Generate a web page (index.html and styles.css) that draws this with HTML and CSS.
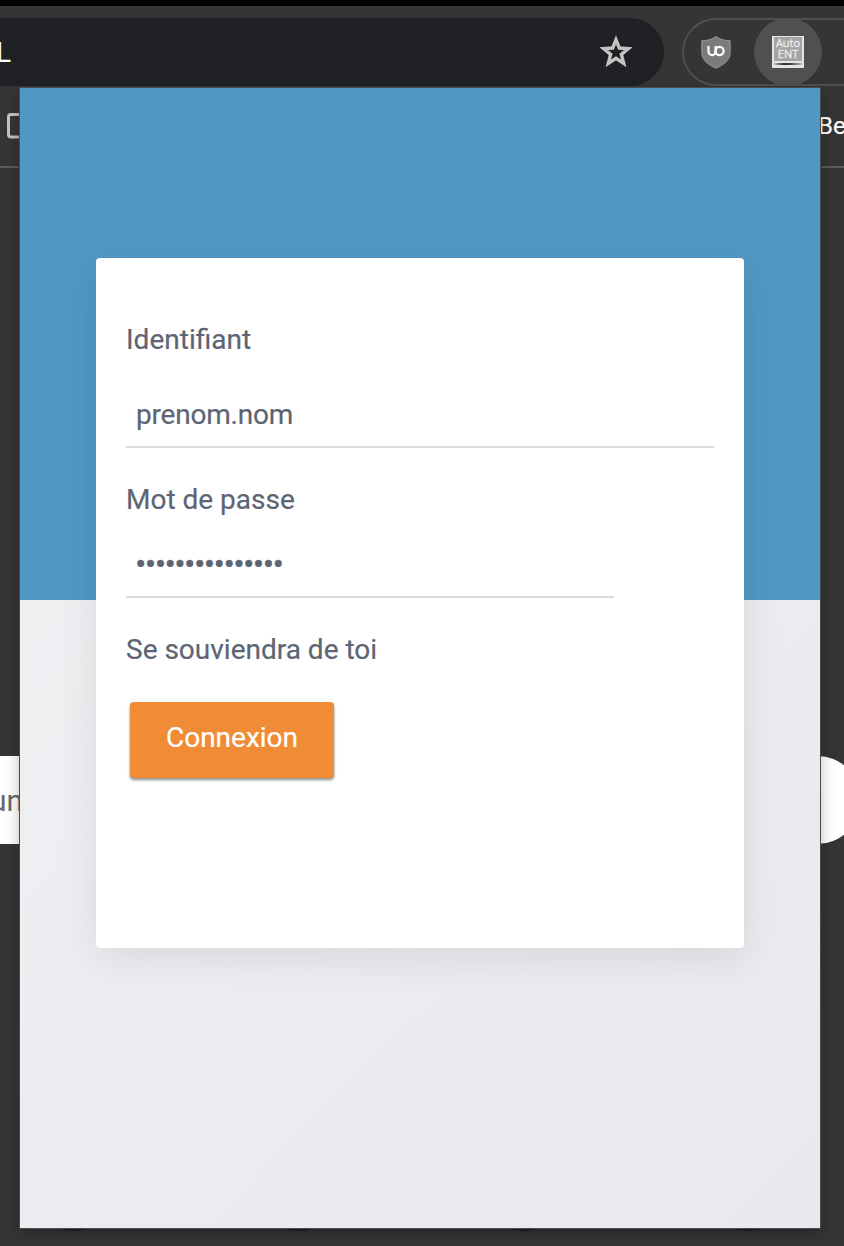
FILE: index.html
```html
<!DOCTYPE html>
<html lang="fr">
<head>
<meta charset="utf-8">
<title>Auto ENT</title>
<link rel="stylesheet" href="styles.css">
</head>
<body>
<div class="browser">
  <header class="toolbar">
    <div class="omnibox">
      <span class="url">L</span>
      <svg class="star" viewBox="0 0 34 34" width="34" height="34"><path d="M17 4.800 L20.300 13 L29.300 13.600 L22.400 19.400 L24.700 28.400 L17 23.400 L9.300 28.400 L11.600 19.400 L4.700 13.600 L13.700 13 Z" fill="none" stroke="#c4c4c4" stroke-width="3.400"/></svg>
    </div>
    <div class="extensions">
      <svg class="shield" viewBox="0 0 30 33" width="30" height="33"><path d="M15 .5 C11.5 3 7 4.6 .8 4.8 V17 C.8 24 7 28.500 15 32.300 C23 28.500 29.200 24 29.200 17 V4.800 C23 4.600 18.500 3 15 .5Z" fill="#7b7b7b" stroke="#969696"/><path d="M7.500 10 V15.500 A3.600 3.600 0 0 0 14.700 15.500 V10" fill="none" stroke="#fff" stroke-width="2.200"/><circle cx="18.500" cy="15" r="4.100" fill="none" stroke="#fff" stroke-width="2.200"/></svg>
      <div class="active-extension">
        <div class="ent-icon"><span>Auto</span><span>ENT</span><i></i></div>
      </div>
    </div>
  </header>
  <div class="bookmarks">
    <svg class="folder" viewBox="0 0 26 26" width="26" height="26"><rect x="1.500" y="1.500" width="23" height="22.500" rx="2.500" fill="none" stroke="#c4c4c4" stroke-width="3"/></svg>
    <span class="bookmark">Be</span>
  </div>
  <main class="new-tab">
    <div class="search"><span>un</span></div>
    <div class="shortcuts"><i></i><i></i><i></i><i></i></div>
  </main>
</div>
<section class="popup">
  <form class="card">
    <label class="label">Identifiant</label>
    <div class="field user">prenom.nom</div>
    <label class="label">Mot de passe</label>
    <div class="field password">•••••••••••••••</div>
    <p class="label remember">Se souviendra de toi</p>
    <button class="submit" type="button">Connexion</button>
  </form>
</section>
</body>
</html>
```
FILE: styles.css
```css
* { box-sizing: border-box; }

body {
  position: relative;
  width: 844px;
  height: 1246px;
  margin: 0;
  overflow: hidden;
  background: #353535;
  font-family: Roboto, "Liberation Sans", sans-serif;
}

.browser {
  display: flex;
  flex-direction: column;
  height: 1246px;
  border-top: 6px solid #000;
}

.toolbar {
  display: flex;
  gap: 18px;
  height: 80px;
  padding-top: 12px;
}

.omnibox {
  display: flex;
  flex: none;
  align-items: center;
  justify-content: space-between;
  width: 664px;
  height: 68px;
  padding-right: 31px;
  border-radius: 0 34px 34px 0;
  background: #202125;
}

.url {
  margin-left: -4px;
  color: #fff;
  font-size: 28px;
}

.star { display: block; }

.extensions {
  display: flex;
  flex: none;
  align-items: center;
  gap: 23px;
  width: 180px;
  height: 68px;
  padding-left: 17px;
  border: 2px solid #505050;
  border-right: 0;
  border-radius: 34px 0 0 34px;
}

.shield { flex: none; }

.active-extension {
  display: flex;
  flex: none;
  align-items: center;
  justify-content: center;
  width: 68px;
  height: 68px;
  border-radius: 50%;
  background: #505050;
}

.ent-icon {
  display: flex;
  flex-direction: column;
  align-items: center;
  width: 32px;
  height: 32px;
  border: solid #e4e4e4;
  border-width: 1px 2px;
  background: #a4a4a4;
  color: #ececec;
  font: 11px/12px "Open Sans", sans-serif;
  -webkit-text-stroke: .3px;
}

.ent-icon span + span { margin-top: -1px; }

.ent-icon i {
  width: 28px;
  height: 6px;
  margin-top: auto;
  border: solid #e4e4e4;
  border-width: 2px 0;
  background: linear-gradient(90deg, #bbb, #333 35%, #444 60%, #bbb);
}

.bookmarks {
  display: flex;
  align-items: center;
  justify-content: space-between;
  height: 82px;
  padding-left: 7px;
  border-bottom: 2px solid #5c5c5c;
}

.bookmark {
  width: 26px;
  white-space: nowrap;
  color: #fff;
  font-size: 24px;
  -webkit-text-stroke: .2px;
}

.new-tab {
  display: flex;
  flex: 1;
  flex-direction: column;
  justify-content: space-between;
  padding-top: 588px;
}

.search {
  display: flex;
  flex: none;
  align-items: center;
  width: 871px;
  height: 88px;
  margin-left: -10px;
  border-radius: 0 44px 44px 0;
  background: #fff;
  color: #69696d;
  font-size: 30px;
}

.shortcuts {
  display: flex;
  justify-content: space-between;
  height: 111px;
  padding: 0 49px 0 27px;
}

.shortcuts i {
  width: 96px;
  height: 96px;
  border-radius: 50%;
  background: #202125;
}

.popup {
  position: absolute;
  top: 88px;
  left: 20px;
  width: 800px;
  height: 1140px;
  padding: 170px 76px 0;
  background:
    linear-gradient(#5098c4, #5098c4) 0 0 / 100% 512px no-repeat,
    linear-gradient(135deg, #f1f2f3, #e8e9ee);
  box-shadow: 0 0 0 1px #454e50, 0 6px 14px rgba(0, 0, 0, .3);
}

.card {
  display: flex;
  flex-direction: column;
  align-items: flex-start;
  width: 648px;
  height: 690px;
  padding: 62px 30px 0;
  border-radius: 4px;
  background: #fff;
  box-shadow: 0 10px 40px rgba(0, 0, 0, .09);
  color: #5d6474;
  font-size: 28px;
  -webkit-text-stroke: .2px;
}

.label {
  height: 40px;
  margin: 0;
  line-height: 40px;
}

.field {
  border-bottom: 2px solid #d9d9de;
  padding: 0 10px;
}

.user {
  width: 588px;
  height: 88px;
  margin-bottom: 32px;
  padding-top: 35px;
  line-height: 40px;
  letter-spacing: -.2px;
}

.password {
  width: 488px;
  height: 78px;
  margin-bottom: 32px;
  padding: 24px 10px 0 9px;
  font-size: 34px;
  line-height: 40px;
  letter-spacing: -1.65px;
}

.submit {
  width: 204px;
  height: 76px;
  margin: 32px 0 0 4px;
  padding: 0 0 6px;
  border: 0;
  border-radius: 4px;
  background: #ef8c35;
  box-shadow: 0 2px 3px rgba(0, 0, 0, .45);
  color: #fff;
  font: 28px Roboto, "Liberation Sans", sans-serif;
  -webkit-text-stroke: .2px;
}
```
